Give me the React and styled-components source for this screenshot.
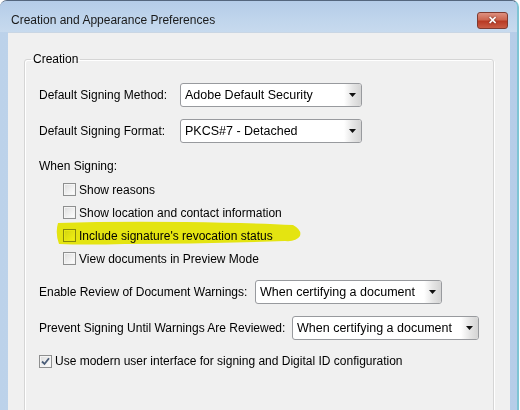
import React from 'react'
import styled, { createGlobalStyle } from 'styled-components'

const GlobalStyle = createGlobalStyle`
    html, body {
        margin: 0;
        padding: 0;
        background: #ffffff;
        overflow: hidden;
    }
    body {
        font-family: "Liberation Sans", Arial, sans-serif;
        font-size: 12px;
        color: #000000;
    }
`

const Checkbox = ({ checked }) => (
    <Box>
        {checked && (
            <svg width="9" height="9" viewBox="0 0 9 9">
                <path d="M1 4.5 L3.5 7 L8 1.2" fill="none" stroke="#4a5d78" strokeWidth="1.8" />
            </svg>
        )}
    </Box>
)

const Dropdown = ({ value, width }) => (
    <Select $width={width}>
        <SelectText>{value}</SelectText>
        <ArrowButton>
            <svg width="7" height="4" viewBox="0 0 7 4">
                <path d="M0 0 H7 L3.5 4 Z" fill="#111" />
            </svg>
        </ArrowButton>
    </Select>
)

const Marker = () => (
    <Highlight width="248" height="24" viewBox="0 0 248 24">
        <path
            d="M3 2 Q 60 0 130 1 Q 200 2 238 4 Q 247 9 245 15 Q 241 21 230 20 Q 150 23 70 23 Q 30 24 4 23 Q 0 12 3 2 Z"
            fill="#f3f312"
        />
    </Highlight>
)

const App = () => {
    return (
        <>
            <GlobalStyle />
            <Window>
                <TitleBar>
                    <Title>Creation and Appearance Preferences</Title>
                    <CloseButton>✕</CloseButton>
                </TitleBar>
                <Client>
                    <Group>
                        <Legend>Creation</Legend>
                        <FieldRow>
                            <Label $width={141}>Default Signing Method:</Label>
                            <Dropdown value="Adobe Default Security" width={182} />
                        </FieldRow>
                        <FieldRow $top={12}>
                            <Label $width={141}>Default Signing Format:</Label>
                            <Dropdown value="PKCS#7 - Detached" width={182} />
                        </FieldRow>
                        <Caption>When Signing:</Caption>
                        <CheckList>
                            <CheckRow>
                                <Checkbox />
                                <span>Show reasons</span>
                            </CheckRow>
                            <CheckRow>
                                <Checkbox />
                                <span>Show location and contact information</span>
                            </CheckRow>
                            <CheckRow>
                                <Checkbox />
                                <span>Include signature's revocation status</span>
                                <Marker />
                            </CheckRow>
                            <CheckRow>
                                <Checkbox />
                                <span>View documents in Preview Mode</span>
                            </CheckRow>
                        </CheckList>
                        <FieldRow $top={10}>
                            <Label $width={216}>Enable Review of Document Warnings:</Label>
                            <Dropdown value="When certifying a document" width={187} />
                        </FieldRow>
                        <FieldRow $top={12}>
                            <Label $width={253}>Prevent Signing Until Warnings Are Reviewed:</Label>
                            <Dropdown value="When certifying a document" width={187} />
                        </FieldRow>
                        <OptionRow>
                            <Checkbox checked />
                            <span>Use modern user interface for signing and Digital ID configuration</span>
                        </OptionRow>
                    </Group>
                </Client>
            </Window>
        </>
    )
}

const Window = styled.div`
    width: 519px;
    height: 410px;
    box-sizing: border-box;
    display: flex;
    flex-direction: column;
    padding: 0 7px 0 8px;
    background: linear-gradient(90deg, #bcd2ea 0%, #c3d7ec 40%, #b6cde8 100%);
    border-top: 1px solid #54667e;
    border-right: 2px solid #7fc4d4;
    border-radius: 7px 7px 0 0;
    overflow: hidden;
`

const TitleBar = styled.div`
    height: 31px;
    flex-shrink: 0;
    display: flex;
    align-items: flex-start;
    justify-content: space-between;
    padding: 11px 9px 0 11px;
    margin: 0 -7px 0 -8px;
    box-sizing: border-box;
    background: linear-gradient(#b4cce8 0%, #c0d5ec 60%, #c7daee 100%);
`

const Title = styled.span`
    line-height: 17px;
    font-size: 12px;
    color: #1a1a1a;
`

const CloseButton = styled.div`
    width: 31px;
    height: 17px;
    box-sizing: border-box;
    display: flex;
    align-items: center;
    justify-content: center;
    border: 1px solid #7e3a30;
    border-radius: 3px;
    background: linear-gradient(#dd9080 0%, #cc6650 45%, #b83a24 55%, #c95c45 100%);
    color: #ffffff;
    font-size: 11px;
    font-weight: bold;
    text-shadow: 0 0 2px #5a140c;
`

const Client = styled.div`
    flex: 1;
    background: #f0f0f0;
    padding: 18px 16px 0 16px;
    border-top: 1px solid #c9d6e4;
`

const Group = styled.fieldset`
    margin: 0;
    padding: 16px 14px 40px 14px;
    border: 1px solid #d5d5d5;
    border-radius: 3px;
    box-shadow: inset 1px 1px 0 #ffffff, 1px 1px 0 #ffffff;
    height: 400px;
`

const Legend = styled.legend`
    margin-left: -8px;
    padding: 0 2px;
    line-height: 16px;
    font-size: 12px;
`

const FieldRow = styled.div`
    display: flex;
    align-items: center;
    height: 24px;
    margin-top: ${({ $top }) => $top || 0}px;
`

const Label = styled.span`
    width: ${({ $width }) => $width}px;
    flex-shrink: 0;
    white-space: nowrap;
`

const Select = styled.div`
    width: ${({ $width }) => $width}px;
    height: 24px;
    box-sizing: border-box;
    display: flex;
    align-items: stretch;
    background: #ffffff;
    border: 1px solid #989a9e;
    border-radius: 3px;
`

const SelectText = styled.span`
    flex: 1;
    display: flex;
    align-items: center;
    padding-left: 4px;
    white-space: nowrap;
    font-size: 12.5px;
`

const ArrowButton = styled.span`
    width: 17px;
    display: flex;
    align-items: center;
    justify-content: center;
    background: linear-gradient(90deg, #ffffff 0%, #e6e6e6 50%, #d4d4d4 100%);
    border-radius: 0 2px 2px 0;
`

const Caption = styled.div`
    margin-top: 15px;
    line-height: 16px;
`

const CheckList = styled.div`
    padding: 4px 0 0 24px;
`

const CheckRow = styled.div`
    position: relative;
    display: flex;
    align-items: center;
    gap: 3px;
    height: 23px;
`

const OptionRow = styled(CheckRow)`
    margin-top: 9px;
    height: 24px;
`

const Box = styled.span`
    width: 13px;
    height: 13px;
    box-sizing: border-box;
    flex-shrink: 0;
    display: flex;
    align-items: center;
    justify-content: center;
    border: 1px solid #8e8f8f;
    background: linear-gradient(135deg, #dcdcdc 0%, #eeeeee 50%, #ffffff 100%);
    box-shadow: inset 0 0 0 1px #f4f4f4;
`

const Highlight = styled.svg`
    position: absolute;
    left: -8px;
    top: -3px;
    mix-blend-mode: multiply;
    pointer-events: none;
`

export default App
